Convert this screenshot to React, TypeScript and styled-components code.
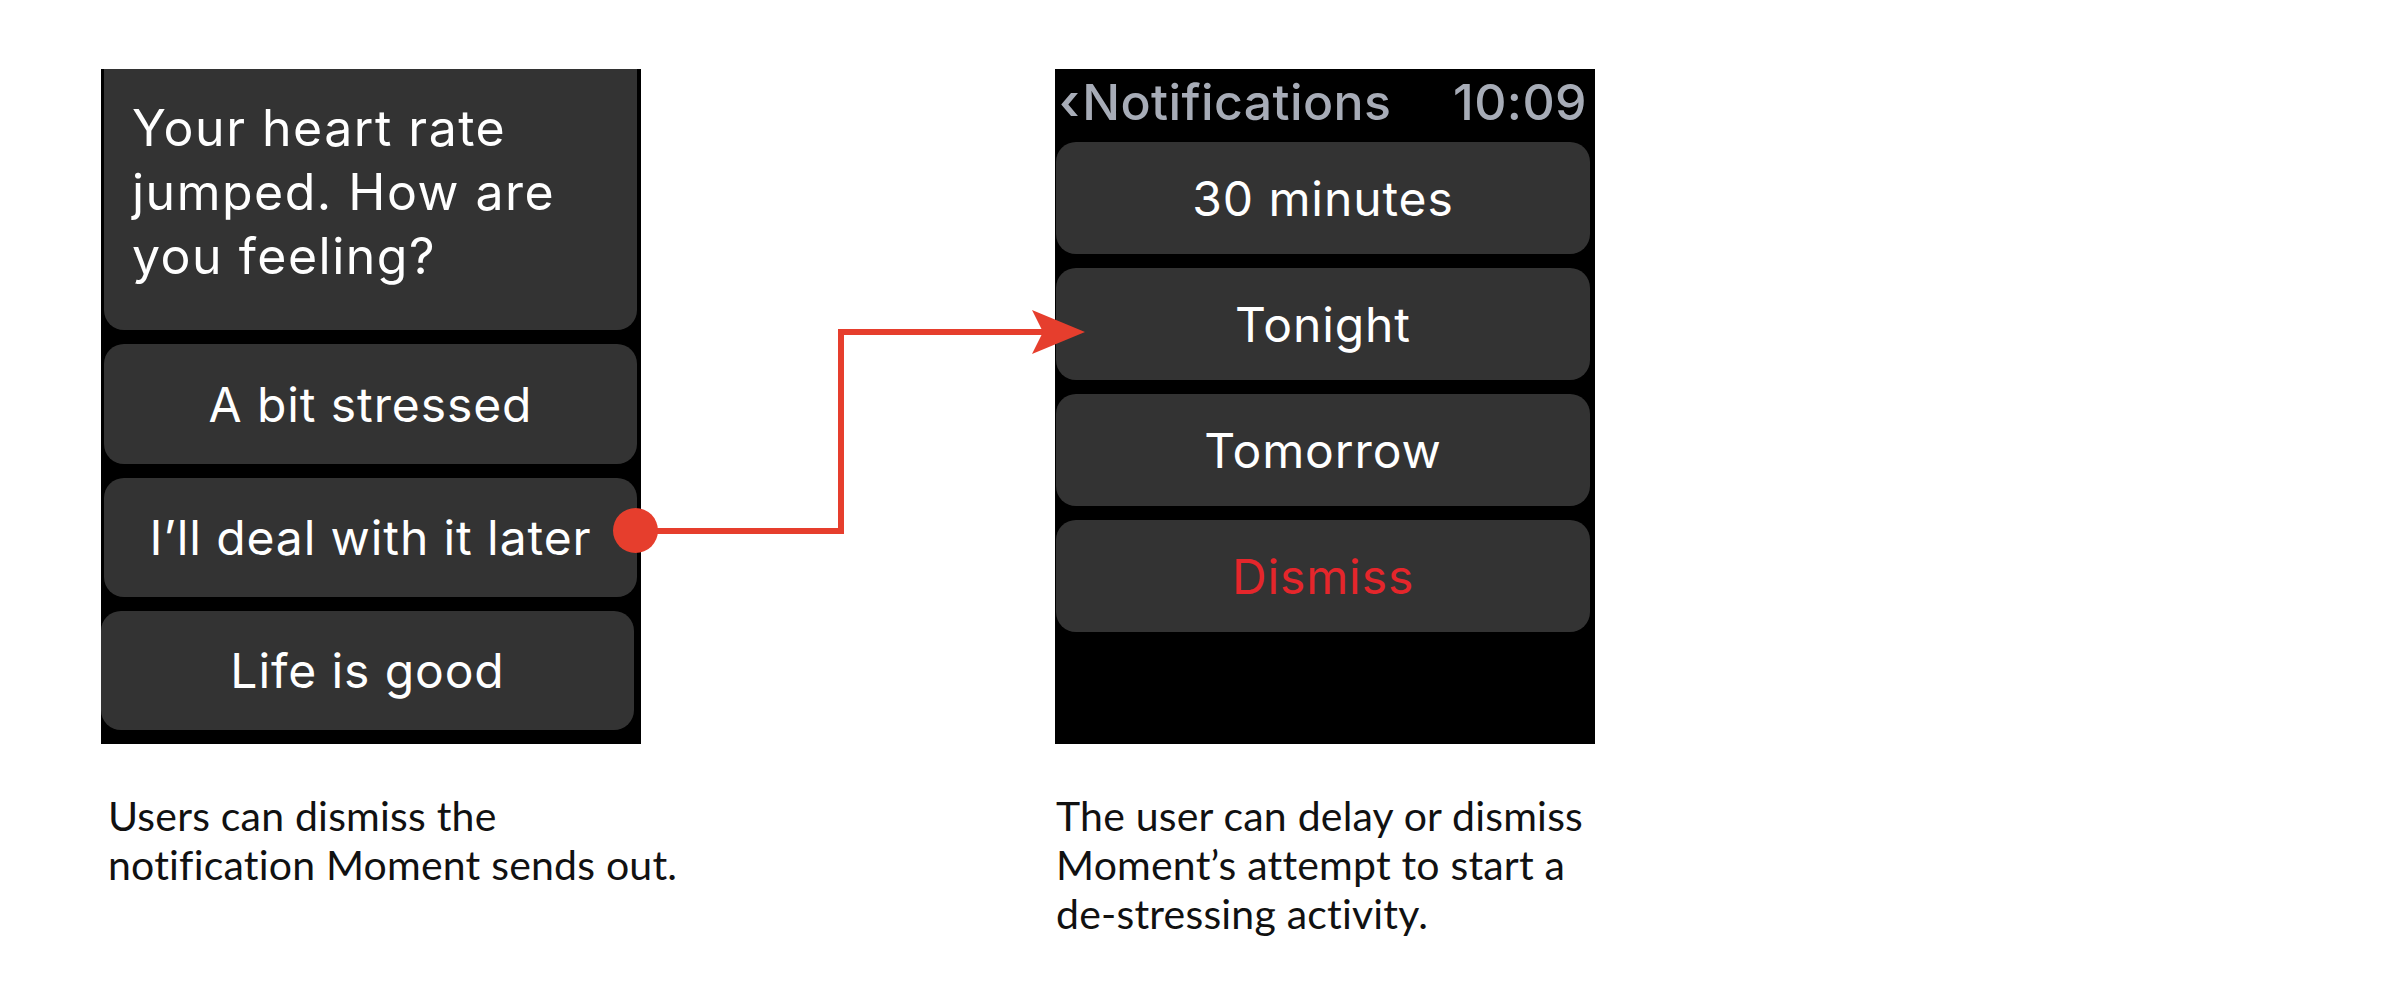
import React from 'react';
import styled, { createGlobalStyle } from 'styled-components';

const GlobalStyle = createGlobalStyle`
  html, body {
    margin: 0;
    padding: 0;
    background: #ffffff;
  }
  body {
    width: 2400px;
    height: 982px;
    overflow: hidden;
  }
`;

const Stage = styled.main`
  position: relative;
  box-sizing: border-box;
  width: 2400px;
  height: 982px;
  padding: 69px 0 0 101px;
  display: flex;
  align-items: flex-start;
  gap: 414px;
`;

const Column = styled.section`
  display: flex;
  flex-direction: column;
  width: 540px;
`;

const Watch = styled.div<{ $pad: string }>`
  box-sizing: border-box;
  width: 540px;
  height: 675px;
  padding: ${(p) => p.$pad};
  background: #000;
  display: flex;
  flex-direction: column;
  gap: 14px;
  font-family: Inter, 'Noto Sans', sans-serif;
  color: #fff;
`;

const StatusBar = styled.header`
  box-sizing: border-box;
  height: 59px;
  display: flex;
  justify-content: space-between;
  align-items: flex-start;
  padding: 3px 3px 0 3px;
  color: #a7acb7;
  font-size: 50px;
  font-weight: 500;
  line-height: 60px;
  letter-spacing: 0.4px;
`;

const Back = styled.span`
  display: inline-block;
  margin-right: 2px;
  font-weight: 600;
`;

const Prompt = styled.div`
  box-sizing: border-box;
  height: 261px;
  padding: 27px 16px 0 28px;
  background: #333333;
  border-radius: 0 0 20px 20px;
  font-size: 50px;
  line-height: 64px;
  letter-spacing: 1.5px;
`;

const Option = styled.button<{ $h: number; $danger?: boolean; $shift?: number }>`
  box-sizing: border-box;
  height: ${(p) => p.$h}px;
  margin: 0 ${(p) => p.$shift ?? 0}px 0 ${(p) => -(p.$shift ?? 0)}px;
  border: 0;
  border-radius: 20px;
  background: #333333;
  color: ${(p) => (p.$danger ? '#e5262b' : '#ffffff')};
  font-family: inherit;
  font-size: 48px;
  letter-spacing: 0.9px;
  display: flex;
  align-items: center;
  justify-content: center;
  padding: 0;
`;

const Caption = styled.p<{ $indent?: number }>`
  margin: 47px 0 0;
  padding-left: ${(p) => p.$indent ?? 0}px;
  font-family: Lato, 'Liberation Sans', sans-serif;
  font-size: 41px;
  line-height: 49px;
  letter-spacing: 0.2px;
  white-space: nowrap;
  color: #111;
`;

const Connector = styled.svg`
  position: absolute;
  left: 0;
  top: 0;
  pointer-events: none;
`;

const RED = '#e63e2d';

export default function App() {
  return (
    <>
      <GlobalStyle />
      <Stage>
        <Column>
          <Watch $pad="0 4px 13px 3px">
            <Prompt>
              Your heart rate
              <br />
              jumped. How are
              <br />
              you feeling?
            </Prompt>
            <Option $h={120}>A bit stressed</Option>
            <Option $h={119}>I’ll deal with it later</Option>
            <Option $h={119} $shift={3}>Life is good</Option>
          </Watch>
          <Caption $indent={7}>
            Users can dismiss the
            <br />
            notification Moment sends out.
          </Caption>
        </Column>
        <Column>
          <Watch $pad="0 5px 0 1px">
            <StatusBar>
              <span>
                <Back>‹</Back>Notifications
              </span>
              <span>10:09</span>
            </StatusBar>
            <Option $h={112}>30 minutes</Option>
            <Option $h={112}>Tonight</Option>
            <Option $h={112}>Tomorrow</Option>
            <Option $h={112} $danger>
              Dismiss
            </Option>
          </Watch>
          <Caption $indent={1}>
            The user can delay or dismiss
            <br />
            Moment’s attempt to start a
            <br />
            de-stressing activity.
          </Caption>
        </Column>
        <Connector width="2400" height="982" viewBox="0 0 2400 982">
          <path d="M635 531 H841 V332 H1044" fill="none" stroke={RED} strokeWidth="6" />
          <circle cx="635.5" cy="530.5" r="22.5" fill={RED} />
          <polygon points="1085,332 1032,310 1043,332 1032,354" fill={RED} />
        </Connector>
      </Stage>
    </>
  );
}
